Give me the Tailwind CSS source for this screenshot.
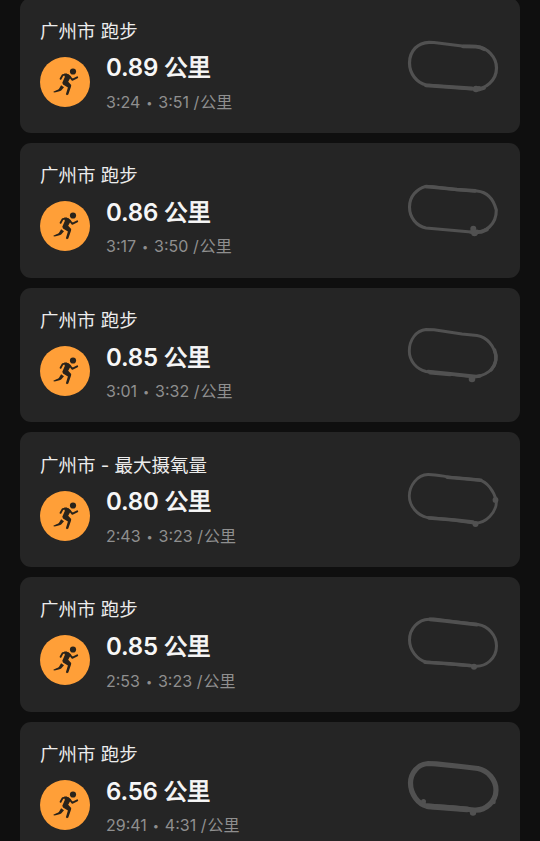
<!DOCTYPE html>
<html lang="zh-CN">
<head>
    <meta charset="UTF-8">
    <meta name="viewport" content="width=device-width, initial-scale=1.0">
    <script src="https://cdn.jsdelivr.net/npm/@tailwindcss/browser@4"></script>
    <title>跑步记录</title>
</head>
<body class="bg-[#0f0f0f] h-screen overflow-hidden font-[Inter,'Noto_Sans_CJK_SC',sans-serif]">
    <main id="runs" class="flex flex-col gap-[10.2px] px-5 -mt-[1.7px]"></main>

    <script>
    // dots: [x, y, radius] blobs where the GPS track bunches up
    const runs = [
        {
            title: '广州市 跑步', distance: '0.89', time: '3:24', pace: '3:51',
            width: 3.2,
            track: 'M34 16.3C23 16.5 14.5 25 14.5 37C14.5 47.5 21.5 56.5 31 59L78 63C91 64 101.5 54 101.5 42C101.5 31 92 21.5 82 20.5L67 20L39 16.5Z',
            thick: 'M31 59.3L77 62.5M84 63.5L89 62M68 20.3L81 20.7C85 21.2 87 22 89 23.2',
            dots: [[81, 63, 3.2], [84, 62.5, 2.5]]
        },
        {
            title: '广州市 跑步', distance: '0.86', time: '3:17', pace: '3:50',
            width: 3.1,
            track: 'M30.5 16.5C22 19 14.5 26 14.5 37C14.5 47.5 21.5 56 31 58L76 62C91 64 101.5 54 101.3 40C98.5 29 92 22 82 21L62 19.7L38 16.8Z',
            thick: 'M31 16.5L62 19.5L80 20.8M76 62L86 62L92 59.5',
            dots: [[78.3, 58.7, 3], [79.5, 63, 3.3], [82, 62, 2.4]]
        },
        {
            title: '广州市 跑步', distance: '0.85', time: '3:01', pace: '3:32',
            width: 2.9,
            track: 'M31 14.5C21 15.5 14.3 25 14.3 36C14.3 46 21.5 54 31 56.5L75 61.5C90 62.5 101.5 54 101 42C99.5 31 92 22 82 20.5L67 19L39 14.8Z',
            thick: 'M33 56.5L53 58.5L81 61.5M35 57.8L55 59.5M99.5 35C102.5 42 101 49 96 55M77 62L85 61',
            dots: [[77, 64, 3.3]]
        },
        {
            title: '广州市 - 最大摄氧量', distance: '0.80', time: '2:43', pace: '3:23',
            width: 2.8,
            track: 'M33 14.5C22 14.7 14.3 26 14.3 36C14.3 46 22.5 55.5 32 57.5L54 59.5L79 63C91 64 101.5 52 101.5 41C99 31 92 21.5 84 20L62 17.8C52 17.5 43 14.3 33 14.5Z',
            thick: 'M34 58L60 60L78 62M52 17.2L70 18.8L86 20.3',
            dots: [[100.5, 40, 2.9], [80.5, 64, 3]]
        },
        {
            title: '广州市 跑步', distance: '0.85', time: '2:53', pace: '3:23',
            width: 3,
            track: 'M34 15.2C23 15.5 14.5 25 14.5 36C14.5 46 22 55.5 31 58L78 62C91 64 101.5 54 101.5 42C101.5 31 93 22 83 20.5L66 18.5L39 15Z',
            thick: 'M35 15.4L50 17L82 20.6M30 58.3L55 59.8L75 61.5',
            dots: [[79, 62.8, 3]]
        },
        {
            title: '广州市 跑步', distance: '6.56', time: '29:41', pace: '4:31',
            width: 5.2,
            track: 'M33 14.5C23 15 15.5 24 15.5 34C15.5 45 23 55 32 57.2L58 58.8L79 61C91 62 101 52 101 41C101 31 93 21.5 83 19.5L66 17.5L41 14.8Z',
            thick: 'M33 57.3L72 60.3',
            dots: [[78, 63.5, 3.2], [28.5, 52.5, 2.5], [98.5, 53, 2.3]]
        }
    ];

    document.getElementById('runs').innerHTML = runs.map(run => `
        <article class="flex justify-between h-[134.5px] shrink-0 pl-5 pr-[5px] rounded-[11px] bg-[#252525]">
            <div>
                <h2 class="mt-[19.2px] h-[27px] text-[18.5px] leading-[27px] text-[#ececec] whitespace-pre">${run.title}</h2>
                <div class="flex gap-4 mt-[7.8px]">
                    <svg class="mt-[4.4px] size-[50px]" viewBox="0 0 50 50">
                        <circle cx="25" cy="25" r="25" fill="#ff9f38"/>
                        <g fill="none" stroke="#29231b" stroke-linecap="round" stroke-linejoin="round">
                            <circle cx="33" cy="14.5" r="3.1" fill="#29231b" stroke="none"/>
                            <path stroke="none" fill="#29231b" d="M24.2 16.6L28.8 17.3L30.8 20L28.2 24.8L31.2 28L31 29.8L28.3 37.4L27 38.2L25.9 37.2L27.9 30.6L23 27.6L22.3 25.8L24.8 20Z"/>
                            <path stroke-width="1.9" d="M20.6 21.8L22.6 18.1L26.5 17.4M29.6 19.2L32.2 22.8L37.2 20.3"/>
                            <path stroke="none" fill="#29231b" d="M21.1 28.2L24 30.2L21.2 33.6C19 34.8 16.5 35.3 13.8 35.5L13.5 34.4C15.5 33.7 17.5 32.9 18.9 31.9Z"/>
                        </g>
                    </svg>
                    <div>
                        <p class="h-8 text-[24px] leading-8 font-semibold text-[#f7f7f7] whitespace-nowrap"><span class="tracking-[-0.2px]">${run.distance}</span> <span class="text-[23.3px] font-normal [-webkit-text-stroke:0.8px_#f7f7f7]">公里</span></p>
                        <p class="mt-[3.5px] h-7 text-[16px] leading-7 text-[#8f8f8f] whitespace-nowrap">${run.time} <span class="inline-block w-[9px] text-center text-[11px] align-[1px]">•</span> ${run.pace} <span class="mr-px">/</span>公里</p>
                    </div>
                </div>
            </div>
            <svg class="mt-[27.3px] w-[120px] h-20" viewBox="0 0 120 80" fill="none" stroke="#515151" stroke-linejoin="round" stroke-linecap="round">
                <path d="${run.track}" stroke-width="${run.width}"/>
                <path d="${run.thick}" stroke-width="${run.width + 0.6}"/>
                ${run.dots.map(([x, y, r]) => `<circle cx="${x}" cy="${y}" r="${r}" fill="#515151" stroke="none"/>`).join('')}
            </svg>
        </article>
    `).join('');
    </script>
</body>
</html>
